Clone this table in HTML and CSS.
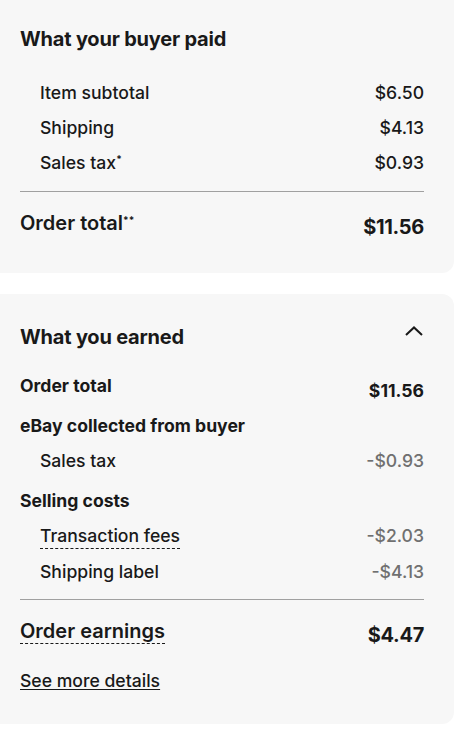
FILE: index.html
```html
<!DOCTYPE html>
<html lang="en">
<head>
<meta charset="utf-8">
<title>Order earnings</title>
<link rel="stylesheet" href="styles.css">
</head>
<body>
<div class="page">
  <section class="card card-paid">
    <h2 class="card-title">What your buyer paid</h2>
    <div class="rows">
      <div class="row sub"><span>Item subtotal</span><span>$6.50</span></div>
      <div class="row sub"><span>Shipping</span><span>$4.13</span></div>
      <div class="row sub"><span>Sales tax<sup class="mark">*</sup></span><span>$0.93</span></div>
    </div>
    <hr class="divider">
    <div class="total-row">
      <span class="total-label">Order total<sup class="mark">**</sup></span>
      <span class="total-value">$11.56</span>
    </div>
  </section>

  <section class="card card-earned">
    <div class="card-head">
      <h2 class="card-title">What you earned</h2>
      <svg class="chevron" width="18" height="10" viewBox="0 0 18 10" aria-hidden="true"><polyline points="1,9 9,1.4 17,9" fill="none" stroke="#191919" stroke-width="2"/></svg>
    </div>
    <div class="rows">
      <div class="row strong"><span>Order total</span><span class="low">$11.56</span></div>
      <div class="row strong"><span>eBay collected from buyer</span></div>
      <div class="row sub"><span>Sales tax</span><span class="neg">-$0.93</span></div>
      <div class="row strong gap"><span>Selling costs</span></div>
      <div class="row sub"><span class="dotted">Transaction fees</span><span class="neg">-$2.03</span></div>
      <div class="row sub"><span>Shipping label</span><span class="neg">-$4.13</span></div>
    </div>
    <hr class="divider">
    <div class="total-row">
      <span class="total-label"><span class="dotted">Order earnings</span></span>
      <span class="total-value">$4.47</span>
    </div>
    <a class="more" href="#">See more details</a>
  </section>
</div>
</body>
</html>
```
FILE: styles.css
```css
* { box-sizing: border-box; }
html, body { margin: 0; padding: 0; background: #ffffff; }
body {
  font-family: Inter, "Noto Sans", Arial, sans-serif;
  color: #191919;
  font-size: 17.6px;
  font-weight: 500;
  line-height: 24px;
  overflow: hidden;
}
.page {
  display: flex;
  flex-direction: column;
  gap: 21px;
  margin: -16px 0 0 -12px;
  width: 466px;
}
.card {
  background: #f7f7f7;
  border-radius: 12px;
  padding: 0 30px 0 32px;
}
.card-paid { padding-top: 43px; padding-bottom: 32px; }
.card-earned { padding-top: 31px; padding-bottom: 31px; }
.card-title {
  margin: 0;
  font-size: 20px;
  line-height: 24px;
  font-weight: 700;
  letter-spacing: -0.2px;
}
.card-head {
  display: flex;
  justify-content: space-between;
  align-items: flex-start;
}
.chevron { margin-top: 1px; margin-right: 1px; display: block; }
.card-paid .rows { margin-top: 24px; }
.card-earned .rows { margin-top: 19px; }
.row {
  display: flex;
  justify-content: space-between;
  align-items: flex-start;
  padding: 5.5px 0;
  line-height: 24px;
}
.row.sub { padding-left: 20px; }
.row.strong { font-weight: 700; }
.row.gap { margin-top: 5px; }
.low { padding-top: 5px; }
.neg { color: #707070; }
.mark {
  font-size: 10px;
  font-weight: 700;
  line-height: 0;
  vertical-align: 6px;
}
.divider {
  margin: 11px 0 0;
  border: 0;
  border-top: 1px solid #a0a0a0;
  height: 0;
}
.card-earned .divider { margin-top: 10px; }
.total-row {
  display: flex;
  justify-content: space-between;
  align-items: flex-start;
  margin-top: 17px;
  font-size: 20px;
  line-height: 28px;
}
.total-label { font-weight: 600; }
.total-value { font-weight: 700; padding-top: 4px; letter-spacing: -0.3px; }
.dotted {
  border-bottom: 1px dashed #191919;
  padding-bottom: 0;
}
.more {
  display: inline-block;
  margin-top: 20px;
  color: #191919;
  text-decoration: underline;
  text-underline-offset: 2px;
  line-height: 24px;
}
```
